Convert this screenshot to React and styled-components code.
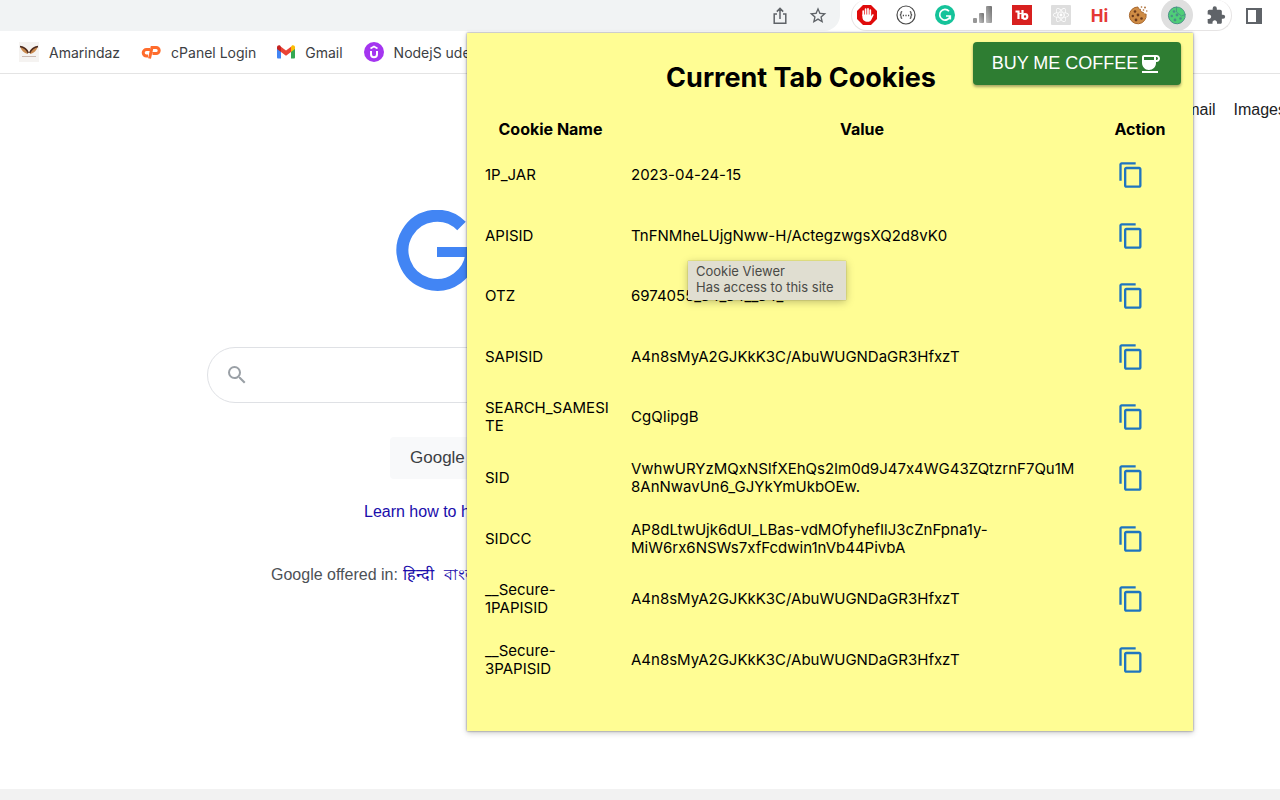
import React, { useState } from 'react';
import styled, { createGlobalStyle, css } from 'styled-components';
import { MdCoffee, MdContentCopy, MdExtension, MdSearch, MdStarBorder } from 'react-icons/md';
import { FaReact } from 'react-icons/fa';

const GlobalStyle = createGlobalStyle`
  * {
    box-sizing: border-box;
  }
  body {
    margin: 0;
    background: #fff;
    font-family: 'Liberation Sans', Arial, sans-serif;
    overflow-x: hidden;
  }
  button, input {
    font-family: inherit;
  }
`;

const Browser = styled.div`
  position: relative;
  display: flex;
  flex-direction: column;
  min-height: 100vh;
  overflow: hidden;
`;

const Toolbar = styled.header`
  display: flex;
  align-items: stretch;
  height: 31px;
  padding-right: 16px;
`;

const AddressBar = styled.div`
  display: flex;
  flex: 1;
  align-items: center;
  justify-content: flex-end;
  gap: 18px;
  margin-right: 11px;
  padding-right: 12px;
  background: #f1f3f4;
  border-radius: 0 0 16px 0;
`;

const Extensions = styled.div`
  display: flex;
  align-items: center;
  justify-content: space-between;
  width: 381px;
  margin-right: 12px;
  padding: 0 5px;
  border: 1px solid #e6e4e4;
  border-top: none;
  border-radius: 16px;
`;

const IconButton = styled.button`
  display: flex;
  flex-shrink: 0;
  align-items: center;
  justify-content: center;
  width: 20px;
  height: 31px;
  padding: 0;
  border: none;
  background: none;
  color: #5f6368;
  cursor: pointer;

  ${({ $active }) =>
    $active && css`
      width: 32px;
      height: 32px;
      margin: 0 -6px;
      border-radius: 50%;
      background: #dfdfdf;
    `}
`;

const HiText = styled.span`
  color: #e53935;
  font: 700 18px Roboto, sans-serif;
`;

const Bookmarks = styled.nav`
  display: flex;
  align-items: center;
  gap: 21px;
  height: 43px;
  padding: 0 19px;
  border-bottom: 1px solid #e4e4e4;
`;

const Bookmark = styled.a`
  display: flex;
  flex-shrink: 0;
  align-items: center;
  gap: 10px;
  color: #3c4043;
  font: 14px Inter, sans-serif;
  text-decoration: none;
`;

const TopLinks = styled.nav`
  display: flex;
  justify-content: flex-end;
  gap: 18px;
  margin-right: -6px;
  padding-top: 26px;

  a {
    color: #202124;
    font-size: 16px;
    line-height: 20px;
    text-decoration: none;
  }
`;

const Main = styled.main`
  display: flex;
  flex: 1;
  flex-direction: column;
  align-items: flex-start;
  width: 100%;
  max-width: 907px;
  padding: 90px 0 0 207px;
`;

const Logo = styled.svg`
  margin-left: 188px;
`;

const SearchBox = styled.label`
  display: flex;
  align-items: center;
  align-self: stretch;
  gap: 12px;
  height: 56px;
  margin-top: 55px;
  padding: 0 17px;
  border: 1px solid #dfe1e5;
  border-radius: 28px;
  color: #9aa0a6;

  input {
    flex: 1;
    border: none;
    outline: none;
    font-size: 16px;
  }
`;

const SearchButton = styled.button`
  height: 42px;
  margin: 34px 0 0 183px;
  padding: 0 20px;
  border: none;
  border-radius: 4px;
  background: #f8f9fa;
  color: #3c4043;
  font-size: 17px;
`;

const Promo = styled.a`
  margin: 23px 0 0 157px;
  color: #1a0dab;
  font-size: 16px;
  line-height: 20px;
  text-decoration: none;
`;

const Languages = styled.div`
  display: flex;
  gap: 5px;
  margin: 43px 0 0 64px;
  color: #4d5156;
  font-size: 16px;
  line-height: 20px;

  a {
    margin-right: 5px;
    color: #1a0dab;
    text-decoration: none;
  }
`;

const Footer = styled.footer`
  height: 11px;
  background: #f2f2f2;
`;

const Popup = styled.section`
  position: absolute;
  top: 33px;
  right: 87px;
  width: 726px;
  padding: 9px 12px 41px 18px;
  background: #fffd94;
  box-shadow: 0 0 2px rgba(0, 0, 0, 0.5), 0 2px 6px rgba(0, 0, 0, 0.2);
  color: #000;
  font-family: Inter, sans-serif;
`;

const PopupHeader = styled.div`
  display: flex;
  align-items: flex-start;
  justify-content: flex-end;
  gap: 37px;
`;

const Title = styled.h1`
  margin: 18px 0 0;
  font-size: 27px;
  line-height: 36px;
  font-weight: 700;
`;

const CoffeeButton = styled.button`
  display: flex;
  align-items: center;
  justify-content: center;
  width: 208px;
  height: 43px;
  padding: 0;
  border: none;
  border-radius: 4px;
  background: #2e7d32;
  box-shadow: 0 2px 3px rgba(0, 0, 0, 0.35);
  color: #fff;
  font: 18px 'Liberation Sans', Arial, sans-serif;
  cursor: pointer;
`;

const CookieTable = styled.table`
  width: 100%;
  height: 577px;
  margin-top: 17px;
  border-collapse: collapse;
  table-layout: fixed;
  font-size: 15px;
  font-variant-ligatures: no-contextual;
  line-height: 18px;
`;

const HeadCell = styled.th`
  width: ${({ $width }) => $width || 'auto'};
  height: 32px;
  padding: ${({ $padding }) => $padding || '0'};
  font-size: 16px;
  font-weight: 700;
`;

const Cell = styled.td`
  height: 60px;
  padding: ${({ $padding }) => $padding || '0'};
  overflow-wrap: anywhere;
`;

const CopyButton = styled.button`
  display: flex;
  padding: 0;
  border: none;
  background: none;
  color: #1f75bf;
  cursor: pointer;
`;

const Tooltip = styled.div`
  position: absolute;
  top: 228px;
  left: 221px;
  padding: 2px 12px 5px 8px;
  background: #e0ded1;
  box-shadow: 0 0 1px rgba(0, 0, 0, 0.4), 0 2px 8px rgba(0, 0, 0, 0.25);
  color: #4a4a46;
  font-size: 13px;
  line-height: 16px;
  white-space: nowrap;
`;

const cookies = [
  { name: '1P_JAR', value: '2023-04-24-15' },
  { name: 'APISID', value: 'TnFNMheLUjgNww-H/ActegzwgsXQ2d8vK0' },
  { name: 'OTZ', value: '6974055_34_34__34_' },
  { name: 'SAPISID', value: 'A4n8sMyA2GJKkK3C/AbuWUGNDaGR3HfxzT' },
  { name: 'SEARCH_SAMESITE', value: 'CgQIipgB' },
  { name: 'SID', value: 'VwhwURYzMQxNSIfXEhQs2Im0d9J47x4WG43ZQtzrnF7Qu1M8AnNwavUn6_GJYkYmUkbOEw.' },
  { name: 'SIDCC', value: 'AP8dLtwUjk6dUI_LBas-vdMOfyhefIlJ3cZnFpna1y-MiW6rx6NSWs7xfFcdwin1nVb44PivbA' },
  { name: '__Secure-1PAPISID', value: 'A4n8sMyA2GJKkK3C/AbuWUGNDaGR3HfxzT' },
  { name: '__Secure-3PAPISID', value: 'A4n8sMyA2GJKkK3C/AbuWUGNDaGR3HfxzT' },
];

const ShareIcon = () => (
  <svg width="20" height="20" viewBox="0 0 20 20" fill="none" stroke="#5f6368" strokeWidth="1.5">
    <path d="M7 8H4.2v9.2h11.6V8H13M10 13V2.5M6.8 5.6 10 2.4l3.2 3.2" />
  </svg>
);

const BlockIcon = () => (
  <svg width="20" height="20" viewBox="0 0 20 20">
    <path d="M6 0h8l6 6v8l-6 6H6l-6-6V6z" fill="#e00b0b" />
    <path
      d="M6.2 10.5V6M8.6 9.5V4.2M11 9.5V3.8M13.3 10V5.2"
      stroke="#fff" strokeWidth="1.7" strokeLinecap="round"
    />
    <path d="M5.4 9.5h8.7v1.7l1.2-1.6c.6-.7 1.7-.1 1.3.7l-2.3 4.5c-.7 1.4-1.8 2-3.6 2-3 0-5.3-1.6-5.3-4.8z" fill="#fff" />
  </svg>
);

const JsonIcon = () => (
  <svg width="20" height="20" viewBox="0 0 20 20" fill="none" stroke="#4a4a4a" strokeWidth="1.2">
    <circle cx="10" cy="10" r="9" />
    <path d="M6.2 6.6c-1.3 0-1.1.7-1.1 1.7 0 .9-.2 1.5-1.2 1.7 1 .2 1.2.8 1.2 1.7 0 1-.2 1.7 1.1 1.7M13.8 6.6c1.3 0 1.1.7 1.1 1.7 0 .9.2 1.5 1.2 1.7-1 .2-1.2.8-1.2 1.7 0 1 .2 1.7-1.1 1.7" />
    <path d="M6.8 10.5H8M9.4 10.5h1.2M12 10.5h1.2" strokeWidth="1.3" />
  </svg>
);

const GrammarIcon = () => (
  <svg width="20" height="20" viewBox="0 0 20 20" fill="none" stroke="#fff" strokeWidth="1.7">
    <circle cx="10" cy="10" r="10" fill="#15c39a" stroke="none" />
    <path d="M14 6.3A5.3 5.3 0 1 0 15.1 11.2M11 11h4.3v3.4" />
  </svg>
);

const BarsIcon = () => (
  <svg width="20" height="20" viewBox="0 0 20 20">
    <defs>
      <linearGradient id="bars" x1="1" y1="0" x2="0" y2="1">
        <stop offset="0" stopColor="#6d6d6d" />
        <stop offset="1" stopColor="#c4c4c4" />
      </linearGradient>
    </defs>
    <rect x="0" y="13" width="4" height="5" rx="1" fill="#969696" />
    <rect x="6" y="8" width="5" height="10" rx="1" fill="url(#bars)" />
    <rect x="13" y="1" width="6" height="17" rx="1" fill="url(#bars)" />
  </svg>
);

const TubeIcon = () => (
  <svg width="20" height="20" viewBox="0 0 20 20" fill="none" stroke="#fff" strokeWidth="2.2">
    <rect width="20" height="20" fill="#d8201f" stroke="none" />
    <path d="M3.5 6.5h3V14M10.5 5v9" />
    <circle cx="13" cy="11.5" r="2.3" />
    <path d="M7 8.5h4" strokeWidth="1.3" />
  </svg>
);

const CookieIcon = ({ fill, edge, chip, bitten }) => (
  <svg width="20" height="20" viewBox="0 0 20 20">
    <path
      d="M10 2c.2 1.6 1 2.3 2.4 2.3-.1 2 1 3.2 2.9 3.1.4 1.3 1.3 1.9 2.8 1.7A8.4 8.4 0 1 1 10 2z"
      fill={fill} stroke={edge} strokeWidth="1"
    />
    {!bitten && <path d="M9.5 2a8.4 8.4 0 0 1 8.6 7.5l-3.6 1.5-5-4z" fill={fill} stroke={edge} strokeWidth="0.8" />}
    <g fill={chip}>
      <circle cx="7" cy="6.5" r="1.3" />
      <circle cx="4.8" cy="11" r="1.2" />
      <circle cx="10" cy="10" r="1.4" />
      <circle cx="8" cy="15" r="1.4" />
      <circle cx="13.5" cy="13.5" r="1.3" />
    </g>
    {bitten && (
      <g fill={edge}>
        <circle cx="13.5" cy="2" r="0.8" />
        <circle cx="17" cy="2.5" r="0.9" />
        <circle cx="15.5" cy="5" r="0.8" />
        <circle cx="18.8" cy="6" r="0.7" />
      </g>
    )}
  </svg>
);

const SidePanelIcon = () => (
  <svg width="18" height="18" viewBox="0 0 18 18">
    <path d="M1 1h16v16H1zM3 3v12h8V3z" fill="#5f6368" fillRule="evenodd" />
  </svg>
);

const WingsIcon = () => (
  <svg width="20" height="20" viewBox="0 0 20 20">
    <rect width="20" height="20" fill="#f5f3f1" />
    <path d="M1 4.5c4 0 7 1.5 8.5 5.5l-.8 2C5 11 2.500 8.5 1 4.5z" fill="#c98a4f" />
    <path d="M19 4.5c-4 0-7 1.5-8.5 5.5l.8 2c3.7-1 6.2-3.5 7.7-7.5z" fill="#c98a4f" />
    <path d="M1 4.5c3.5.5 6.5 2 8.3 6.5M19 4.5c-3.5.5-6.500 2-8.3 6.5" fill="none" stroke="#4a2a20" strokeWidth="1.4" />
    <path d="M3 14.5h14" stroke="#c9b9b2" strokeWidth="1" />
  </svg>
);

const CpanelIcon = () => (
  <svg width="20" height="20" viewBox="0 0 20 20" fill="none" stroke="#ff6c2c" strokeWidth="3">
    <path d="M9 7.5H5.5a3.3 3.3 0 0 0 0 6.6H7" />
    <path d="M8.5 16.5 11 5.5h4.2a2.9 2.9 0 0 1 0 6H11.5" />
  </svg>
);

const GmailIcon = () => (
  <svg width="18" height="20" viewBox="0 0 18 20">
    <path d="M0 5v10.200c0 .7.5 1.300 1.200 1.300H4V8z" fill="#4285f4" />
    <path d="M14 8v8.5h2.8c.7 0 1.200-.6 1.200-1.300V5z" fill="#34a853" />
    <path d="M14 4.8V10l4-3V5.400c0-2-2-2.700-3.300-1.700z" fill="#fbbc04" />
    <path d="M4 10V4.8l5 3.7 5-3.7V10l-5 3.8z" fill="#ea4335" />
    <path d="M0 5.400V7l4 3V4.8l-.7-1.100C2 2.700 0 3.400 0 5.400z" fill="#c5221f" />
  </svg>
);

const UdemyIcon = () => (
  <svg width="20" height="20" viewBox="0 0 20 20" fill="none" stroke="#fff" strokeWidth="2">
    <circle cx="10" cy="10" r="10" fill="#a435f0" stroke="none" />
    <path d="M7 9v3.2a3 3 0 0 0 6 0V9" />
    <path d="M6.5 6.5 10 4.5l3.5 2" strokeWidth="1.6" />
  </svg>
);

const bookmarks = [
  { label: 'Amarindaz', icon: <WingsIcon /> },
  { label: 'cPanel Login', icon: <CpanelIcon /> },
  { label: 'Gmail', icon: <GmailIcon /> },
  { label: 'NodejS udemy', icon: <UdemyIcon /> },
];

const extensions = [
  { label: 'Ad blocker', icon: <BlockIcon /> },
  { label: 'JSON', icon: <JsonIcon /> },
  { label: 'Grammar', icon: <GrammarIcon /> },
  { label: 'Analytics', icon: <BarsIcon /> },
  { label: 'Video tools', icon: <TubeIcon /> },
  {
    label: 'React',
    icon: (
      <svg width="20" height="20" viewBox="0 0 20 20">
        <rect width="20" height="20" rx="1" fill="#dedede" />
        <FaReact x="2" y="2" size={16} color="#fff" />
      </svg>
    ),
  },
  { label: 'Hi', icon: <HiText>Hi</HiText> },
  { label: 'Cookies', icon: <CookieIcon fill="#cf8c45" edge="#a8672c" chip="#6b3a1c" bitten /> },
  { label: 'Cookie Viewer', icon: <CookieIcon fill="#4fce78" edge="#4a8f86" chip="#4a8f86" />, active: true },
  { label: 'Extensions', icon: <MdExtension size={21} /> },
];

const App = () => {
  const [query, setQuery] = useState('');

  const copyValue = (value) => {
    navigator.clipboard?.writeText(value);
  };

  return (
    <Browser>
      <GlobalStyle />
      <Toolbar>
        <AddressBar>
          <IconButton aria-label="Share"><ShareIcon /></IconButton>
          <IconButton aria-label="Bookmark this tab"><MdStarBorder size={21} /></IconButton>
        </AddressBar>
        <Extensions>
          {extensions.map((item) => (
            <IconButton key={item.label} aria-label={item.label} $active={item.active}>
              {item.icon}
            </IconButton>
          ))}
        </Extensions>
        <IconButton aria-label="Side panel"><SidePanelIcon /></IconButton>
      </Toolbar>

      <Bookmarks>
        {bookmarks.map((item) => (
          <Bookmark key={item.label} href="#">
            {item.icon}
            {item.label}
          </Bookmark>
        ))}
      </Bookmarks>

      <TopLinks>
        <a href="#">Gmail</a>
        <a href="#">Images</a>
      </TopLinks>

      <Main>
        <Logo width="84" height="82" viewBox="0 0 84 82" fill="none" stroke="#4285f4" role="img" aria-label="Google">
          <path d="M66.5 16A34.5 34.5 0 1 0 76.5 41.5" strokeWidth="12" />
          <path d="M42 42h40.5" strokeWidth="10" />
        </Logo>
        <SearchBox>
          <MdSearch size={24} />
          <input aria-label="Search" value={query} onChange={(e) => setQuery(e.target.value)} />
        </SearchBox>
        <SearchButton>Google</SearchButton>
        <Promo href="#">Learn how to help</Promo>
        <Languages>
          Google offered in:
          <a href="#">हिन्दी</a>
          <a href="#">বাংলা</a>
        </Languages>
      </Main>
      <Footer />

      <Popup>
        <PopupHeader>
          <Title>Current Tab Cookies</Title>
          <CoffeeButton>
            BUY ME COFFEE
            <MdCoffee size={24} />
          </CoffeeButton>
        </PopupHeader>
        <CookieTable>
          <thead>
            <tr>
              <HeadCell $width="146px" $padding="0 15px 0 0">Cookie Name</HeadCell>
              <HeadCell>Value</HeadCell>
              <HeadCell $width="88px" $padding="0 0 0 6px">Action</HeadCell>
            </tr>
          </thead>
          <tbody>
            {cookies.map((cookie) => (
              <tr key={cookie.name}>
                <Cell $padding="0 15px 0 0">{cookie.name}</Cell>
                <Cell $padding="0 15px 0 0">{cookie.value}</Cell>
                <Cell $padding="0 0 0 24px">
                  <CopyButton aria-label={`Copy ${cookie.name}`} onClick={() => copyValue(cookie.value)}>
                    <MdContentCopy size={28} />
                  </CopyButton>
                </Cell>
              </tr>
            ))}
          </tbody>
        </CookieTable>
        <Tooltip role="tooltip">
          Cookie Viewer
          <br />
          Has access to this site
        </Tooltip>
      </Popup>
    </Browser>
  );
};

export default App;
